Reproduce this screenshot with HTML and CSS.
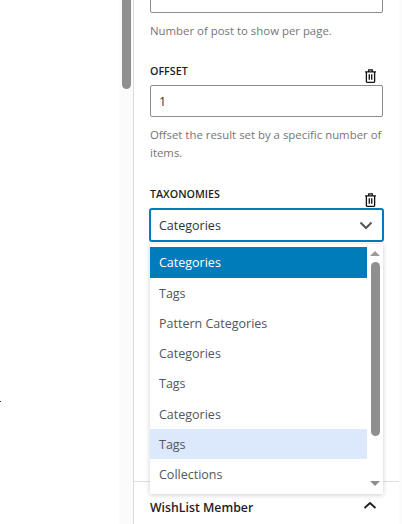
FILE: index.html
```html
<!DOCTYPE html>
<html lang="en">
<head>
<meta charset="utf-8">
<title>Query settings</title>
<link rel="stylesheet" href="styles.css">
</head>
<body>
<div class="app">
  <div class="canvas">
    <span class="tick"></span>
    <div class="canvas-gutter"><div class="canvas-thumb"></div></div>
  </div>
  <aside class="sidebar">
    <div class="panel">
      <div class="field field-first">
        <div class="input"></div>
        <p class="hint">Number of post to show per page.</p>
      </div>
      <div class="field field-offset">
        <div class="label-row">
          <span class="label">OFFSET</span>
          <svg class="trash" viewBox="0 0 14 16" aria-hidden="true"><path d="M5 2.6V1h4v1.6M.8 3.2h12.4M2.3 3.2v11.2c0 .5.3.8.8.8h7.8c.5 0 .8-.3.8-.8V3.2M5.6 6v6.3M8.4 6v6.3"/></svg>
        </div>
        <div class="input"><span class="value">1</span></div>
        <p class="hint">Offset the result set by a specific number of items.</p>
      </div>
      <div class="field field-tax">
        <div class="label-row">
          <span class="label">TAXONOMIES</span>
          <svg class="trash" viewBox="0 0 14 16" aria-hidden="true"><path d="M5 2.6V1h4v1.6M.8 3.2h12.4M2.3 3.2v11.2c0 .5.3.8.8.8h7.8c.5 0 .8-.3.8-.8V3.2M5.6 6v6.3M8.4 6v6.3"/></svg>
        </div>
        <div class="select">
          <span class="value">Categories</span>
          <svg class="chev" viewBox="0 0 14 9" aria-hidden="true"><path d="M1.5 1.5 7 7l5.5-5.5"/></svg>
        </div>
        <div class="dropdown">
          <ul class="options">
            <li class="opt selected">Categories</li>
            <li class="opt">Tags</li>
            <li class="opt">Pattern Categories</li>
            <li class="opt">Categories</li>
            <li class="opt">Tags</li>
            <li class="opt">Categories</li>
            <li class="opt hovered">Tags</li>
            <li class="opt">Collections</li>
          </ul>
          <div class="list-scroll">
            <span class="arrow-up"></span>
            <span class="list-thumb"></span>
            <span class="arrow-down"></span>
          </div>
        </div>
      </div>
    </div>
    <div class="section">
      <span class="section-title">WishList Member</span>
      <svg class="chev-up" viewBox="0 0 14 9" aria-hidden="true"><path d="M1.5 7 7 2l5.5 5"/></svg>
    </div>
  </aside>
  <div class="edge"></div>
</div>
</body>
</html>
```
FILE: styles.css
```css
* { box-sizing: border-box; }
html, body { margin: 0; height: 100%; overflow: hidden; background: #fff; }
body { font-family: "Open Sans", "Noto Sans", sans-serif; color: #1e1e1e; }
.app { display: flex; width: 402px; height: 524px; }

.canvas { width: 133px; flex: none; position: relative; display: flex; justify-content: flex-end; background: #fff; }
.tick { position: absolute; left: 0; top: 401px; width: 1px; height: 1px; background: #333; }
.canvas-gutter { width: 14px; background: #fbfbfb; padding-left: 3px; }
.canvas-thumb { width: 9px; height: 89px; background: #8f8f8f; border-radius: 0 0 5px 5px; }

.sidebar { width: 266px; flex: none; border-left: 1px solid #dcdcdc; display: flex; flex-direction: column; height: 524px; }
.edge { flex: 1; background: #fbfbfb; }

.panel { padding: 0 17px 0 16px; height: 482px; border-bottom: 1px solid #e0e0e0; }
.field { position: relative; }
.field-first { margin-top: -20px; }
.field-first .input { height: 33px; }
.field-offset { margin-top: 19px; }
.field-tax { margin-top: 20px; }
.field-tax .trash { margin-bottom: -1px; }

.label-row { display: flex; justify-content: space-between; align-items: flex-end; height: 24px; margin-bottom: 2px; padding-right: 6px; width: 233px; }
.label { font-size: 10.7px; font-weight: 600; line-height: 16px; align-self: center; color: #1e1e1e; }
.trash { width: 13px; height: 14px; fill: none; stroke: #111; stroke-width: 1.5; }

.input { width: 233px; height: 32px; border: 1px solid #8c8c8c; border-radius: 2px; display: flex; align-items: center; padding-left: 8px; background: #fff; }
.value { font-size: 12.5px; color: #2c3338; }
.hint { margin: 9px 0 0; width: 240px; font-size: 11.4px; line-height: 18px; color: #757575; }

.select { width: 235px; height: 34px; margin-left: -1px; border: 2px solid #007cba; border-radius: 3px; display: flex; align-items: center; justify-content: space-between; padding: 0 9px 0 8px; background: #fff; }
.chev { width: 14px; height: 9px; fill: none; stroke: #50575e; stroke-width: 2; }

.dropdown { position: absolute; left: 0; top: 62px; width: 233px; height: 250px; background: #fff; display: flex; padding-top: 3px; box-shadow: 0 1px 5px rgba(0, 0, 0, .2); z-index: 2; }
.options { list-style: none; margin: 0; padding: 0; width: 218px; }
.opt { height: 30.15px; line-height: 30.15px; padding-top: 1px; padding-left: 9px; font-size: 12.5px; color: #50575e; }
.opt.selected { height: 31px; line-height: 31px; padding-top: 0; background: #007cba; color: #fff; }
.opt.hovered { background: #dce8fb; }
.list-scroll { flex: 1; display: flex; flex-direction: column; align-items: center; padding-left: 3px; padding-right: 3px; margin-top: -3px; }
.arrow-up { margin-top: 7px; border: 5px solid transparent; border-top: 0; border-bottom: 5px solid #9a9a9a; }
.list-thumb { width: 9px; height: 174px; margin-top: 6px; border-radius: 5px; background: #8f8f8f; }
.arrow-down { margin-top: 45px; border: 5px solid transparent; border-bottom: 0; border-top: 5px solid #8f8f8f; }

.section { flex: 1; display: flex; justify-content: space-between; align-items: center; padding: 8px 17px 0 16px; }
.section-title { font-size: 12.3px; font-weight: 600; color: #1e1e1e; }
.chev-up { width: 14px; height: 9px; fill: none; stroke: #1e1e1e; stroke-width: 1.8; margin-right: 5px; margin-bottom: 4px; }
```
